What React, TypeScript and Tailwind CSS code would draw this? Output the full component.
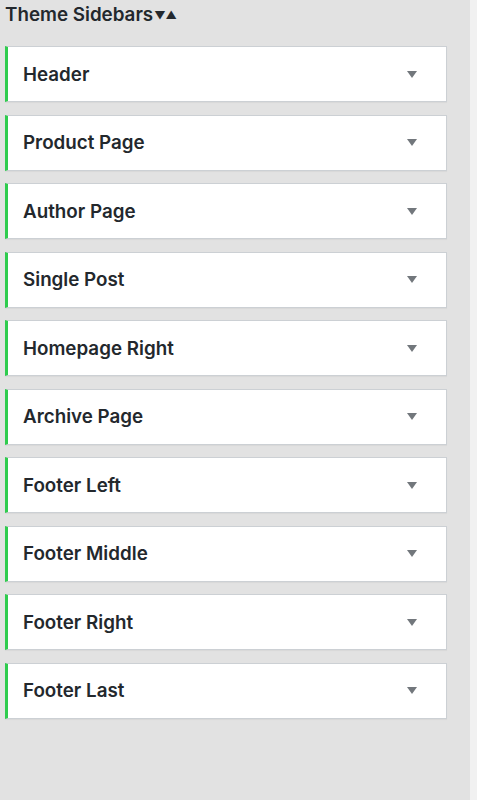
const sidebars = [
  'Header',
  'Product Page',
  'Author Page',
  'Single Post',
  'Homepage Right',
  'Archive Page',
  'Footer Left',
  'Footer Middle',
  'Footer Right',
  'Footer Last',
]

function SidebarRow({ name }: { name: string }) {
  return (
    <div className="flex h-[56px] items-center justify-between border border-[#ccd0d4] border-l-[3px] border-l-[#2fcc4e] bg-white shadow-[0_1px_1px_rgba(0,0,0,0.04)]">
      <span className="pl-[15px] pt-[2px] text-[18.8px] font-semibold text-[#23282d]">{name}</span>
      <svg width="10" height="7" viewBox="0 0 10 7" className="mr-[29px]">
        <path d="M0 0 L10 0 L5 7 Z" fill="#72777c" />
      </svg>
    </div>
  )
}

export default function App() {
  return (
    <div className="flex min-h-[800px] w-[477px] bg-[#e2e2e2] font-['Inter','Liberation_Sans',sans-serif]">
      <div className="w-[470px] pl-[5px] pr-[23px]">
        <h2 className="flex h-[30px] items-center pt-[1px] text-[18.8px] font-semibold text-[#23282d]">
          Theme Sidebars
          <span className="ml-[1px] text-[11px] leading-none">▼▲</span>
        </h2>
        <div className="mt-[16px] flex flex-col gap-[12.5px]">
          {sidebars.map((s) => (
            <SidebarRow key={s} name={s} />
          ))}
        </div>
      </div>
      <div className="flex-1 bg-[#f1f1f1]" />
    </div>
  )
}
